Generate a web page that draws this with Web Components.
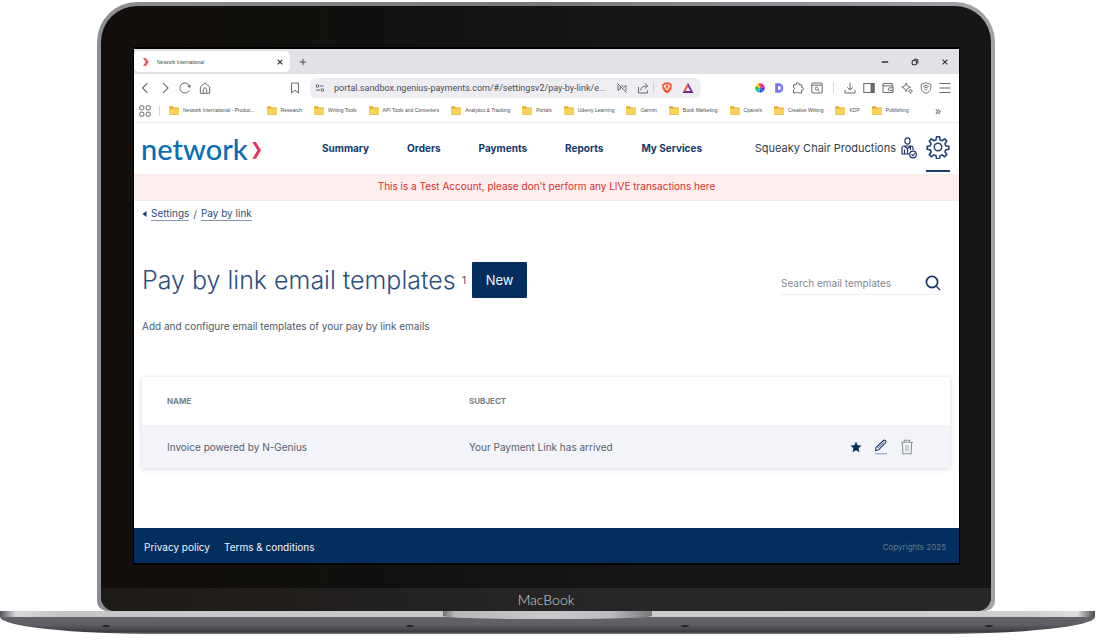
<!DOCTYPE html>
<html lang="en">
<head>
<meta charset="utf-8">
<title>Network International</title>
<style>
  html, body { margin: 0; background: #fff; }
  body { font-family: Inter, "Liberation Sans", sans-serif; color: #4c5a68; }
</style>
</head>
<body>
<laptop-frame label="MacBook">
  <browser-window>
    <tab-strip slot="chrome">Network International</tab-strip>
    <tool-bar slot="chrome" address="portal.sandbox.ngenius-payments.com/#/settingsv2/pay-by-link/e..."></tool-bar>
    <bookmark-bar slot="chrome">
      <bookmark-item>Network International - Produc...</bookmark-item>
      <bookmark-item>Research</bookmark-item>
      <bookmark-item>Writing Tools</bookmark-item>
      <bookmark-item>API Tools and Converters</bookmark-item>
      <bookmark-item>Analytics &amp; Tracking</bookmark-item>
      <bookmark-item>Portals</bookmark-item>
      <bookmark-item>Udemy Learning</bookmark-item>
      <bookmark-item>Garmin</bookmark-item>
      <bookmark-item>Book Marketing</bookmark-item>
      <bookmark-item>Cpanels</bookmark-item>
      <bookmark-item>Creative Writing</bookmark-item>
      <bookmark-item>KDP</bookmark-item>
      <bookmark-item>Publishing</bookmark-item>
    </bookmark-bar>
    <site-header account="Squeaky Chair Productions"></site-header>
    <test-banner>This is a Test Account, please don't perform any LIVE transactions here</test-banner>
    <crumb-trail></crumb-trail>
    <page-heading count="1">
      Pay by link email templates
      <search-box slot="search" placeholder="Search email templates"></search-box>
      <span slot="intro">Add and configure email templates of your pay by link emails</span>
    </page-heading>
    <template-table></template-table>
    <site-footer></site-footer>
  </browser-window>
</laptop-frame>

<script>
const ICONS = {
  brand: ['0 0 8 10', '<path d="M1 1h2.800l3 4-3 4H1l2.700-4z" fill="#f25560"/>'],
  close: ['0 0 10 10', '<path d="M2 2l6 6M8 2l-6 6" stroke="currentColor" stroke-width="1.400"/>'],
  plus: ['0 0 10 10', '<path d="M5 1v8M1 5h8" stroke="currentColor"/>'],
  min: ['0 0 10 10', '<path d="M1 5h8" stroke="currentColor" stroke-width="1.6"/>'],
  restore: ['0 0 10 10', '<rect x="1.5" y="3.2" width="5.3" height="5.3" rx="1.2" fill="none" stroke="currentColor" stroke-width="1.4"/><path d="M3.4 1.6h3.2a2 2 0 0 1 2 2v3.2" fill="none" stroke="currentColor" stroke-width="1.4"/>'],
  back: ['0 0 12 12', '<path d="M8.500 1.2L3.500 6l5 4.800" fill="none" stroke="currentColor" stroke-width="1.1"/>'],
  forward: ['0 0 12 12', '<path d="M4 1.200L9 6l-5 4.800" fill="none" stroke="currentColor" stroke-width="1.1"/>'],
  reload: ['0 0 12 12', '<path d="M10.200 8.600A5 5 0 1 1 10.600 4.300" fill="none" stroke="currentColor" stroke-width="1"/><path d="M11.600 2.600l-.3 3.400-3-1.500z" fill="currentColor"/>'],
  home: ['0 0 12 12', '<path d="M1.300 5L6 .9 10.700 5v6.300H1.300z" fill="none" stroke="currentColor" stroke-linejoin="round"/><path d="M4.300 11V7.500a1.700 1.700 0 0 1 3.400 0V11" fill="none" stroke="currentColor" stroke-width=".9"/>'],
  mark: ['0 0 12 12', '<path d="M2.500 1h7v10L6 8.300 2.500 11z" fill="none" stroke="currentColor" stroke-linejoin="round"/>'],
  tune: ['0 0 10 10', '<circle cx="2.400" cy="3" r="1.300" fill="none" stroke="currentColor"/><circle cx="7.400" cy="7" r="1.300" fill="none" stroke="currentColor"/><path d="M4.500 3h4M1.200 7h4" stroke="currentColor"/>'],
  eyeoff: ['0 0 12 12', '<path d="M1.500 1.500l9 9M2 3.500v5l2.500-2M4.500 4.800v2.400M10 3.500v5M7.500 5.500L10 3.500M5.500 3l2 1.500" fill="none" stroke="currentColor"/>'],
  share: ['0 0 12 12', '<path d="M1.500 5v6h9V8.500M3.600 8.200C4 5.200 6 4 10 4M7.800 1.300L10.800 4 7.800 6.500" fill="none" stroke="currentColor"/>'],
  brave: ['0 0 12 12', '<path d="M3.500.6h5L9.600 1.800l1.100.3-.1 3.900L9 9.300l-3 2.300-3-2.300L1.400 6l-.1-3.900 1.100-.3z" fill="#fb542b"/><path d="M3.300 3l1.700-.5h2L8.700 3l.6 1.400-1.800 2L7.400 7.500 6 8.600 4.600 7.500l-.1-1.100-1.800-2z" fill="#fff"/><path d="M5 3.500h2L6.500 6.500h-1zM4 4.300l1 .5M8 4.300l-1 .5" fill="#fb542b" stroke="#fb542b" stroke-width=".5"/>'],
  bat: ['0 0 12 12', '<path d="M6 .8L.5 11h11L6 .8z" fill="#8b2a8f"/><path d="M6 .8L.5 11l3-1.800L6 4.500z" fill="#ff5a2b"/><path d="M.5 11h11L8.500 9.200h-5z" fill="#5b2d90"/><path d="M6 4.700L3.700 9h4.600z" fill="#fff"/>'],
  wheel: ['0 0 10 10', '<path d="M5 5L3.400.6A4.700 4.700 0 0 1 6.600.6z" fill="#fb3b3b"/><path d="M5 5L6.600.6a4.700 4.700 0 0 1 3 3.500z" fill="#f31ca5"/><path d="M5 5l4.600-.9a4.700 4.700 0 0 1-1.300 4.200z" fill="#7d21ed"/><path d="M5 5l3.300 3.300A4.700 4.700 0 0 1 4.200 9.600z" fill="#1c63f0"/><path d="M5 5l-.8 4.600A4.700 4.700 0 0 1 .9 7.400z" fill="#10c7c9"/><path d="M5 5L.9 7.400A4.700 4.700 0 0 1 .8 3z" fill="#22c22c"/><path d="M5 5L.8 3A4.700 4.700 0 0 1 3.400.6z" fill="#f6d500"/>'],
  dee: ['0 0 10 10', '<path fill-rule="evenodd" d="M1.200.2h4A4.200 4.200 0 0 1 9.200 5a4.200 4.200 0 0 1-4 4.800h-4zM4 3v4h1a2 2 0 0 0 0-4z" fill="#7a74f8"/>'],
  puzzle: ['0 0 12 12', '<path d="M1.500 2.800h2.700a1.500 1.500 0 1 1 2.800 0h2.700v2.500a1.400 1.400 0 1 1 0 2.700v3H6.500a1.400 1.400 0 0 0-2.500 0H1.500V8a1.400 1.400 0 0 0 0-2.700z" fill="none" stroke="currentColor" stroke-linejoin="round"/>'],
  panelsearch: ['0 0 12 12', '<rect x=".8" y="1" width="10.400" height="10" rx="1" fill="none" stroke="currentColor"/><path d="M1 3.200h10" stroke="currentColor"/><circle cx="5.700" cy="6.600" r="1.500" fill="none" stroke="currentColor" stroke-width=".9"/><path d="M6.800 7.700l1.700 1.600" stroke="currentColor"/>'],
  download: ['0 0 12 12', '<path d="M6 .8v7M3.300 5.300L6 8l2.700-2.700M1 8v3h10V8" fill="none" stroke="currentColor"/>'],
  sidebar: ['0 0 12 12', '<rect x=".8" y="1.500" width="10.400" height="9" fill="none" stroke="currentColor"/><rect x="7.500" y="1.500" width="3.700" height="9" fill="currentColor"/>'],
  wallet: ['0 0 12 12', '<path d="M10.200 4V1.500H2a1 1 0 0 0 0 2.400h9v6.600H1V2.500" fill="none" stroke="currentColor"/><path d="M11 5.800H7.500a1.300 1.300 0 0 0 0 2.600H11" fill="none" stroke="currentColor"/>'],
  sparkle: ['0 0 12 12', '<path d="M5 1l1.300 3L9.500 5.300 6.300 6.600 5 9.800 3.700 6.600.8 5.300 3.700 4zM9.500 7l.7 1.500 1.300.7-1.300.7-.7 1.500-.7-1.500-1.300-.7 1.300-.7z" fill="none" stroke="currentColor" stroke-linejoin="round" stroke-width=".9"/>'],
  shield: ['0 0 12 12', '<path d="M6 .8l4.800 1.500v3.500C10.800 8.500 8.600 10.500 6 11.400 3.400 10.500 1.200 8.500 1.200 5.800V2.300z" fill="none" stroke="currentColor" stroke-width=".9"/><path d="M3 4.600a4.500 4.500 0 0 1 6 0M4.100 6.100a2.800 2.800 0 0 1 3.800 0" fill="none" stroke="currentColor" stroke-width=".9"/><circle cx="6" cy="7.600" r=".8" fill="currentColor"/>'],
  menu: ['0 0 12 12', '<path d="M.5 1.500h11M.5 6h11M.5 10.500h11" stroke="currentColor"/>'],
  grid: ['0 0 12 12', '<g fill="none" stroke="currentColor"><rect x=".8" y=".8" width="4" height="4" rx="1"/><rect x="7.200" y=".8" width="4" height="4" rx="1"/><rect x=".8" y="7.200" width="4" height="4" rx="1"/><rect x="7.200" y="7.200" width="4" height="4" rx="1"/></g>'],
  folder: ['0 0 10 9', '<path d="M0 1.200Q0 .3.900.3h2.700l1.200 1.200h4.300q.9 0 .9.900V8q0 .7-.9.700H.9Q0 8.700 0 8z" fill="#e0aa2c"/><path d="M0 2.500h10V7.700q0 .6-.9.600H.9Q0 8.300 0 7.700z" fill="#fbd258"/>'],
  chevron: ['0 0 11 20', '<path d="M0 0h4.200l6 9.800-6 9.800H0l6-9.800z" fill="#e8345a"/>'],
  person: ['0 0 16 22', '<g fill="none" stroke="#1b3469" stroke-width="1.200"><ellipse cx="6.500" cy="4" rx="2.600" ry="3.200"/><path d="M8.500 17H1V11Q1 9 3 9h7q2 0 2 2v2M3.500 17v-4.500M6.500 17v-5.500M3.500 9.500l3 2 3-2M9.500 9.500V13"/><circle cx="12" cy="17.500" r="3.300"/><path d="M10.500 17.400l1.200 1.300 2.300-2.300"/></g>'],
  gear: ['0 0 24 24', '<path d="M10.400 1.200h3.200l.6 3.400 2.200.9 2.800-2 2.300 2.300-2 2.800.9 2.200 3.400.6v3.200l-3.400.6-.9 2.200 2 2.800-2.300 2.300-2.800-2-2.200.9-.6 3.400h-3.200l-.6-3.400-2.200-.9-2.800 2-2.300-2.300 2-2.800-.9-2.200-3.400-.6v-3.200l3.400-.6.9-2.200-2-2.800 2.300-2.300 2.800 2 2.200-.9z" transform="translate(1 .6) scale(.92 .94)" fill="none" stroke="#1f4372" stroke-width="1.700" stroke-linejoin="round"/><circle cx="12" cy="12" r="3.700" fill="none" stroke="#1f4372" stroke-width="1.500"/>'],
  search: ['0 0 16 16', '<circle cx="7" cy="7" r="5.600" fill="none" stroke="#17336b" stroke-width="1.700"/><path d="M11 11l4 4" stroke="#17336b" stroke-width="1.300"/>'],
  star: ['0 0 12 12', '<path d="M6 .5l1.600 3.700 4 .4-3 2.700.9 4L6 9.200l-3.500 2.100.9-4-3-2.700 4-.4z" fill="#03305e"/>'],
  edit: ['0 0 14 16', '<path d="M1.500 11.700l.6-3.200L9.500 1.500q1-.8 2 .1t.1 2L4.600 10.800z" fill="#f3f4f9" stroke="#1f3a6e" stroke-width="1.100" stroke-linejoin="round"/><path d="M4 9L9.800 3.300" stroke="#1f3a6e" stroke-width=".7"/><path d="M1 14.700h12" stroke="#a3b4d0" stroke-width="1.500"/>'],
  trash: ['0 0 14 16', '<path d="M1 3.200h12M4.300 3V1.200h5.400V3M2.300 3.400l.6 11.400h8.200l.6-11.400" fill="none" stroke="#8a9399" stroke-width="1.100"/><path d="M5.900 6v6.500M8.100 6v6.500" stroke="#a3aab0"/>'],
  caret: ['0 0 5 6', '<path d="M4.500 0v6L.5 3z" fill="#12386b"/>'],
};

const define = (name, render) => customElements.define(name, class extends HTMLElement {
  connectedCallback() {
    if (this.shadowRoot) return;
    const template = document.createElement('template');
    template.innerHTML = render(this);
    this.attachShadow({ mode: 'open' }).append(template.content.cloneNode(true));
  }
});

define('ui-icon', el => {
  const [box, art] = ICONS[el.getAttribute('name')];
  return `<style>:host{display:inline-flex;flex:none;width:12px;height:12px}svg{width:100%;height:100%;display:block}</style>
  <svg viewBox="${box}" aria-hidden="true">${art}</svg>`;
});

define('laptop-frame', el => `
<style>
  :host { display: block; padding: 2px 2px 0 0; }
  .lid { margin: 0 100px 0 97px; padding: 4px 4px 0; border-radius: 40px 40px 10px 10px;
    background: linear-gradient(90deg, #8d8e92, #77787c 50%, #a5a1a8); }
  .bezel { border-radius: 36px 36px 14px 14px; overflow: hidden;
    background: linear-gradient(90deg, #130e0b, #10110f 30%, #161616 60%); }
  .glass { margin: 0 31px 0 32px; padding: 41px 0 23px; }
  .edge { border: 2px solid #000; border-left-width: 1px; border-right-width: 1px; }
  .chin { height: 23px; line-height: 23px; text-align: center; color: #d6d6d8; font-family: Lato, sans-serif; font-size: 14px; font-weight: 300;
    background: linear-gradient(90deg, #1e1a17, #272727 60%); }
  .base { position: relative; }
  .deck { height: 6px; background: linear-gradient(90deg, #55545a, #d8d8da 16px, #c6c6c9 60px, #d0d0d3 calc(100% - 60px), #dedee0 calc(100% - 18px), #4b4a4e); }
  .under { height: 17px; border-radius: 0 0 160px 160px / 0 0 17px 17px; display: flex; justify-content: space-between; align-items: center;
    padding: 0 102px; box-sizing: border-box;
    background: linear-gradient(#66646a, #605e64 45%, #3c3a3f 88%, #858488); }
  .under i { width: 8px; height: 2px; border-radius: 50%; background: #29282b; }
  .under i:nth-child(2) { margin-left: 28px; }
  .under i:nth-child(3) { margin-right: 28px; }
  .notch { position: absolute; top: 0; left: 0; right: 0; margin: 0 auto; width: 209px; height: 8px; border-radius: 0 0 90px 90px / 0 0 3px 3px;
    background: linear-gradient(90deg, #6f6e72, #b8b7ba 12px, #c9c8cc 50%, #bdbcc0 80%, #77767a); }
</style>
<div class="lid"><div class="bezel">
  <div class="glass"><div class="edge"><slot></slot></div></div>
  <div class="chin">${el.getAttribute('label')}</div>
</div></div>
<div class="base"><div class="deck"></div><div class="under"><i></i><i></i><i></i><i></i></div><div class="notch"></div></div>`);

define('browser-window', () => `
<style>
  :host { display: block; background: #fff; }
</style>
<slot name="chrome"></slot><main><slot></slot></main>`);

define('tab-strip', () => `
<style>
  :host { display: flex; height: 25px; background: #e2e1e7; color: #444; align-items: center; font: 5px "Liberation Sans", sans-serif; }
  .tab { display: flex; align-items: center; width: 156px; height: 21px; box-sizing: border-box; padding: 0 6px 0 8px; background: #fff; border-radius: 5px; }
  .tab ui-icon { width: 8px; height: 10px; margin-right: 7px; }
  .tab span { flex: 1; }
  button { display: flex; border: 0; padding: 0; background: none; color: #333; }
  button ui-icon { width: 8px; height: 8px; }
  .tab button ui-icon { margin: 0; width: 8px; height: 8px; }
  .add { margin-left: 9px; }
  .win { margin-left: auto; display: flex; gap: 22px; padding-right: 10px; }
  .win ui-icon { width: 8px; height: 8px; }
</style>
<div class="tab"><ui-icon name="brand"></ui-icon><span><slot></slot></span><button aria-label="Close tab"><ui-icon name="close"></ui-icon></button></div>
<button class="add" aria-label="New tab"><ui-icon name="plus"></ui-icon></button>
<div class="win"><button aria-label="Minimise"><ui-icon name="min"></ui-icon></button><button aria-label="Restore"><ui-icon name="restore"></ui-icon></button><button aria-label="Close"><ui-icon name="close"></ui-icon></button></div>`);

define('tool-bar', el => `
<style>
  :host { display: flex; height: 27px; align-items: center; background: #fff; color: #66686f; padding: 0 8px 0 5px; }
  button { display: flex; border: 0; padding: 0; background: none; color: inherit; }
  .nav { display: flex; gap: 8px; width: 162px; }
  .nav button:last-child { margin-left: auto; }
  .url { display: flex; align-items: center; width: 391px; height: 20px; box-sizing: border-box; margin-left: 9px; padding: 0 7px 0 5px; border-radius: 6px; background: #eeedf2; }
  .url > ui-icon { width: 10px; height: 10px; }
  input { flex: 1; min-width: 0; margin: 0 0 0 9px; padding: 0; border: 0; background: none; color: #4b4d55; font: 9px Roboto, sans-serif; outline: 0; }
  .url button { margin-left: 9px; }
  .url hr { width: 1px; height: 11px; border: 0; margin: 0 -2px 0 4px; background: #cfced6; }
  .ext { margin-left: auto; display: flex; gap: 7px; align-items: center; }
  .ext hr { width: 1px; height: 11px; border: 0; margin: 0 3px; background: #d9d8df; }
  .small ui-icon { width: 10px; height: 10px; margin: 0 1px; }
</style>
<div class="nav"><button aria-label="Back"><ui-icon name="back"></ui-icon></button><button aria-label="Forward"><ui-icon name="forward"></ui-icon></button><button aria-label="Reload"><ui-icon name="reload"></ui-icon></button><button aria-label="Home"><ui-icon name="home"></ui-icon></button><button aria-label="Bookmark"><ui-icon name="mark"></ui-icon></button></div>
<div class="url"><ui-icon name="tune"></ui-icon><input aria-label="Address" value="${el.getAttribute('address')}">
<button aria-label="Hidden"><ui-icon name="eyeoff"></ui-icon></button><button aria-label="Share"><ui-icon name="share"></ui-icon></button><hr><button aria-label="Shields"><ui-icon name="brave"></ui-icon></button><button aria-label="Rewards"><ui-icon name="bat"></ui-icon></button></div>
<div class="ext"><button class="small" aria-label="Colours"><ui-icon name="wheel"></ui-icon></button><button class="small" aria-label="Dictionary"><ui-icon name="dee"></ui-icon></button><button aria-label="Extensions"><ui-icon name="puzzle"></ui-icon></button><button aria-label="Search page"><ui-icon name="panelsearch"></ui-icon></button><hr><button aria-label="Downloads"><ui-icon name="download"></ui-icon></button><button aria-label="Sidebar"><ui-icon name="sidebar"></ui-icon></button><button aria-label="Wallet"><ui-icon name="wallet"></ui-icon></button><button aria-label="Assistant"><ui-icon name="sparkle"></ui-icon></button><button aria-label="VPN"><ui-icon name="shield"></ui-icon></button><button aria-label="Menu"><ui-icon name="menu"></ui-icon></button></div>`);

define('bookmark-bar', () => `
<style>
  :host { display: flex; height: 19px; align-items: center; padding: 0 18px 2px 5px; border-bottom: 1px solid #ececf0; background: #fff; color: #66686f; }
  hr { width: 1px; height: 10px; border: 0; margin: 0 9px 0 8px; background: #d5d5da; }
  .list { display: flex; gap: 12px; flex: 1; }
  button { border: 0; padding: 0; background: none; color: inherit; font: 12px/12px "Noto Sans", sans-serif; }
</style>
<ui-icon name="grid"></ui-icon><hr><div class="list"><slot></slot></div><button aria-label="More bookmarks">»</button>`);

define('bookmark-item', () => `
<style>
  :host { display: block; }
  a { display: flex; gap: 4px; align-items: center; color: #4b4d52; text-decoration: none; white-space: nowrap; font: 5px/9px "Liberation Sans", sans-serif; }
  ui-icon { width: 10px; height: 9px; }
</style>
<a href="#"><ui-icon name="folder"></ui-icon><slot></slot></a>`);

define('site-header', el => `
<style>
  :host { display: flex; height: 51px; box-sizing: border-box; align-items: center; padding: 0 9px 2px 7px; }
  a { color: #12386b; text-decoration: none; }
  .logo { display: flex; align-items: center; gap: 4px; width: 181px; padding-top: 3px; color: #0a6cb4; font: 500 29px/36px Lato, sans-serif; }
  .logo ui-icon { width: 10px; height: 17px; margin-top: 3px; }
  nav { display: flex; gap: 38px; font-weight: 700; font-size: 10px; line-height: 16px; white-space: nowrap; }
  .user { margin-left: auto; font-size: 11px; line-height: 16px; color: #323c47; white-space: nowrap; }
  button { border: 0; padding: 0; background: none; display: flex; }
  .who { margin-left: 5px; } .who ui-icon { width: 16px; height: 22px; }
  .cog { margin-left: 9px; align-self: flex-end; padding: 0 0 11px; border-bottom: 2px solid #1b3f70; }
  .cog ui-icon { width: 24px; height: 24px; }
</style>
<a class="logo" href="#"><span>network</span><ui-icon name="chevron"></ui-icon></a>
<nav><a href="#">Summary</a><a href="#">Orders</a><a href="#">Payments</a><a href="#">Reports</a><a href="#">My Services</a></nav>
<span class="user">${el.getAttribute('account')}</span>
<button class="who" aria-label="Account"><ui-icon name="person"></ui-icon></button>
<button class="cog" aria-label="Settings"><ui-icon name="gear"></ui-icon></button>`);

define('test-banner', () => `
<style>
  :host { display: block; text-align: center; height: 26px; line-height: 25px; font-size: 10px; color: #d8302f; background: #fdeeee; border-bottom: 1px solid #ebedf2; }
</style><slot></slot>`);

define('crumb-trail', () => `
<style>
  :host { display: block; padding: 5px 8px 0; }
  nav { display: flex; gap: 4px; align-items: center; font-size: 10px; line-height: 14px; color: #3d5878; }
  a { color: #2e4f7b; text-decoration: none; border-bottom: 1px solid #8397b2; }
  ui-icon { width: 5px; height: 6px; }
</style>
<nav aria-label="Breadcrumb"><ui-icon name="caret"></ui-icon><a href="#">Settings</a><span>/</span><a href="#">Pay by link</a></nav>`);

define('page-heading', el => `
<style>
  :host { display: block; padding: 41px 18px 0 8px; }
  .row { display: flex; align-items: center; height: 36px; }
  h1 { margin: 0; font-weight: 300; font-size: 25px; line-height: 36px; color: #2b4f80; white-space: nowrap; }
  .count { margin: 0 6px; font-size: 11px; }
  button { width: 55px; height: 36px; border: 0; border-radius: 1px; padding: 0; background: #032e5d; color: #f2f5f9; font: 13px Inter, sans-serif; }
  .search { margin-left: auto; }
  p { margin: 20px 0 0; font-size: 10px; line-height: 16px; }
</style>
<div class="row"><h1><slot></slot></h1><span class="count">${el.getAttribute('count')}</span><button>New</button><div class="search"><slot name="search"></slot></div></div>
<p><slot name="intro"></slot></p>`);

define('search-box', el => `
<style>
  :host { display: block; }
  form { display: flex; align-items: center; width: 160px; height: 21px; margin-top: 7px; border-bottom: 1px solid #eceef0; }
  input { flex: 1; min-width: 0; border: 0; outline: 0; padding: 0; background: none; font: 10px Inter, sans-serif; }
  input::placeholder { color: #82898f; opacity: 1; }
  button { border: 0; padding: 0; background: none; display: flex; }
  ui-icon { width: 16px; height: 16px; }
</style>
<form><input type="search" aria-label="Search" placeholder="${el.getAttribute('placeholder')}"><button type="button" aria-label="Search"><ui-icon name="search"></ui-icon></button></form>`);

define('template-table', () => `
<style>
  :host { display: block; padding: 43px 9px 60px 8px; }
  table { width: 100%; border-collapse: collapse; table-layout: fixed; box-shadow: 0 1px 5px rgba(40,50,70,.2); font-size: 10px; background: #fff; }
  th, td { padding: 0 0 0 25px; text-align: left; }
  th { height: 48px; font-size: 8px; color: #76828a; font-weight: 700; }
  td { height: 43px; background: #f3f4f9; color: #56616c; }
  th:first-child { width: 277px; }
  .tools { display: flex; gap: 12px; align-items: center; justify-content: flex-end; padding-right: 36px; }
  button { border: 0; padding: 0; background: none; display: flex; }
  .tools ui-icon { width: 14px; height: 16px; }
  .tools .star { width: 12px; height: 12px; }
</style>
<table><thead><tr><th>NAME</th><th>SUBJECT</th><th></th></tr></thead>
<tbody><tr><td>Invoice powered by N-Genius</td><td>Your Payment Link has arrived</td>
<td><div class="tools"><button aria-label="Default"><ui-icon class="star" name="star"></ui-icon></button><button aria-label="Edit"><ui-icon name="edit"></ui-icon></button><button aria-label="Delete"><ui-icon name="trash"></ui-icon></button></div></td></tr></tbody></table>`);

define('site-footer', () => `
<style>
  :host { display: block; }
  footer { display: flex; gap: 14px; height: 35px; align-items: center; padding: 3px 13px 0 10px; box-sizing: border-box; background: #032e5d; font-size: 10px; }
  a { color: #f0f4f8; text-decoration: none; }
  small { margin-left: auto; font-size: 8px; color: #64788f; }
</style>
<footer><a href="#">Privacy policy</a><a href="#">Terms &amp; conditions</a><small>Copyrights 2025</small></footer>`);
</script>
</body>
</html>
